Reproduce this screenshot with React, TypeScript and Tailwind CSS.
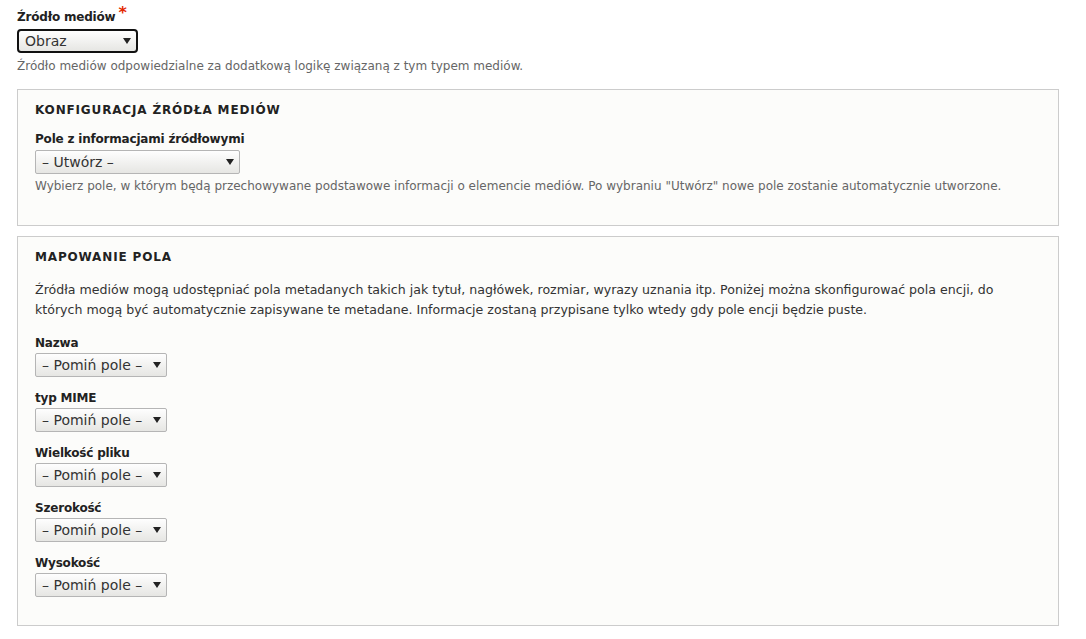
import React from "react";

const font = { fontFamily: '"DejaVu Sans", Verdana, sans-serif' };

function Caret() {
  return (
    <svg width="8" height="6" viewBox="0 0 8 6" className="shrink-0">
      <path d="M0 0 L8 0 L4 6 Z" fill="#222" />
    </svg>
  );
}

function FakeSelect({ value, width, focused }: { value: string; width: string; focused?: boolean }) {
  return (
    <div
      className={
        "flex items-center justify-between h-[24px] pl-[6px] pr-[5px] text-[14px] text-[#333] bg-gradient-to-b from-[#fefefe] to-[#e6e6e3] " +
        width +
        (focused
          ? " border-2 border-[#111] rounded-[4px] text-[#111]"
          : " border border-[#b5b5b5] rounded-[2px]")
      }
    >
      <span>{value}</span>
      <Caret />
    </div>
  );
}

const mapFields = ["Nazwa", "typ MIME", "Wielkość pliku", "Szerokość", "Wysokość"];

export default function App() {
  return (
    <div className="min-h-[639px] bg-white px-[17px] pt-[8px] text-[#333]" style={font}>
      {/* Źródło mediów */}
      <div className="text-[12px] font-bold text-[#222] leading-[18px] tracking-[-0.2px]">
        Źródło mediów<span className="text-[#e32700] ml-[3px] text-[16px] leading-[10px] relative top-[-3px]">*</span>
      </div>
      <div className="mt-[3px]">
        <FakeSelect value="Obraz" width="w-[121px]" focused />
      </div>
      <div className="mt-[5px] text-[12px] text-[#666] leading-[16px]">
        Źródło mediów odpowiedzialne za dodatkową logikę związaną z tym typem mediów.
      </div>

      {/* Konfiguracja */}
      <div className="mt-[15px] w-[1042px] h-[137px] border border-[#ccc] bg-[#fcfcfa] px-[17px] pt-[12px]">
        <div className="text-[12px] font-bold uppercase tracking-[0.07em] text-[#222] leading-[16px]">
          Konfiguracja źródła mediów
        </div>
        <div className="mt-[12px] text-[12px] font-bold text-[#222] leading-[18px] tracking-[-0.2px]">
          Pole z informacjami źródłowymi
        </div>
        <div className="mt-[2px]">
          <FakeSelect value="– Utwórz –" width="w-[205px]" />
        </div>
        <div className="mt-[4px] text-[12px] text-[#666] leading-[16px]">
          Wybierz pole, w którym będą przechowywane podstawowe informacji o elemencie mediów. Po wybraniu "Utwórz" nowe pole zostanie automatycznie utworzone.
        </div>
      </div>

      {/* Mapowanie pola */}
      <div className="mt-[10px] w-[1042px] h-[390px] border border-[#ccc] bg-[#fcfcfa] px-[17px] pt-[12px]">
        <div className="text-[12px] font-bold uppercase tracking-[0.07em] text-[#222] leading-[16px]">
          Mapowanie pola
        </div>
        <p className="mt-[15px] text-[12.6px] text-[#333] leading-[20px]">
          Źródła mediów mogą udostępniać pola metadanych takich jak tytuł, nagłówek, rozmiar, wyrazy uznania itp. Poniżej można skonfigurować pola encji, do
          <br />
          których mogą być automatycznie zapisywane te metadane. Informacje zostaną przypisane tylko wtedy gdy pole encji będzie puste.
        </p>
        <div className="mt-[14px] flex flex-col gap-[12px]">
          {mapFields.map((f) => (
            <div key={f}>
              <div className="text-[12px] font-bold text-[#222] leading-[18px] tracking-[-0.2px]">{f}</div>
              <div className="mt-[1px]">
                <FakeSelect value="– Pomiń pole –" width="w-[132px]" />
              </div>
            </div>
          ))}
        </div>
      </div>
    </div>
  );
}
